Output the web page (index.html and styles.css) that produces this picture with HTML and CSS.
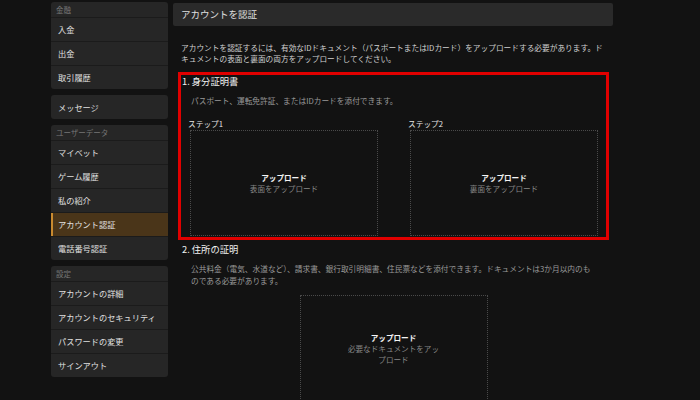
FILE: index.html
```html
<!doctype html>
<html lang="ja">
  <head>
    <meta charset="UTF-8" />
    <meta name="viewport" content="width=device-width, initial-scale=1.0" />
    <title>アカウントを認証</title>
    <link rel="stylesheet" href="styles.css">
  </head>
  <body>
    <div class="layout">
      <!-- サイドメニュー -->
      <nav class="sidebar">
        <div class="menu-group">
          <div class="menu-head">金融</div>
          <a class="menu-item" href="#">入金</a>
          <a class="menu-item" href="#">出金</a>
          <a class="menu-item" href="#">取引履歴</a>
        </div>
        <div class="menu-group">
          <a class="menu-item" href="#">メッセージ</a>
        </div>
        <div class="menu-group">
          <div class="menu-head">ユーザーデータ</div>
          <a class="menu-item" href="#">マイベット</a>
          <a class="menu-item" href="#">ゲーム履歴</a>
          <a class="menu-item" href="#">私の紹介</a>
          <a class="menu-item active" href="#">アカウント認証</a>
          <a class="menu-item" href="#">電話番号認証</a>
        </div>
        <div class="menu-group">
          <div class="menu-head">設定</div>
          <a class="menu-item" href="#">アカウントの詳細</a>
          <a class="menu-item" href="#">アカウントのセキュリティ</a>
          <a class="menu-item" href="#">パスワードの変更</a>
          <a class="menu-item" href="#">サインアウト</a>
        </div>
      </nav>

      <main class="main">
        <div class="page-head">アカウントを認証</div>
        <p class="intro">
          アカウントを認証するには、有効なIDドキュメント（パスポートまたはIDカード）をアップロードする必要があります。ドキュメントの表面と裏面の両方をアップロードしてください。
        </p>

        <section class="doc-section highlight">
          <div class="doc-title">1. 身分証明書</div>
          <p class="doc-note">パスポート、運転免許証、またはIDカードを添付できます。</p>
          <div class="steps">
            <div class="step">
              <div class="step-label">ステップ1</div>
              <div class="upload-box">
                <div class="upload-title">アップロード</div>
                <div class="upload-sub">表面をアップロード</div>
              </div>
            </div>
            <div class="step">
              <div class="step-label">ステップ2</div>
              <div class="upload-box">
                <div class="upload-title">アップロード</div>
                <div class="upload-sub">裏面をアップロード</div>
              </div>
            </div>
          </div>
        </section>

        <section class="doc-section">
          <div class="doc-title">2. 住所の証明</div>
          <p class="doc-note">公共料金（電気、水道など）、請求書、銀行取引明細書、住民票などを添付できます。ドキュメントは3か月以内のものである必要があります。</p>
          <div class="upload-box single">
            <div class="upload-title">アップロード</div>
            <div class="upload-sub">必要なドキュメントをアップロード</div>
          </div>
        </section>
      </main>
    </div>
  </body>
</html>
```

FILE: styles.css
```css
body {
  margin: 0;
  padding: 0;
  background: #121212;
  color: #ddd;
  font-family: 'Noto Sans CJK JP', 'Noto Sans', sans-serif;
}

.layout {
  display: flex;
  align-items: flex-start;
  gap: 5px;
  padding: 2px 0 20px 51px;
}

/* サイドメニュー */
.sidebar {
  width: 117px;
  display: flex;
  flex-direction: column;
  gap: 6px;
}

.menu-group {
  background: #262626;
  border-radius: 3px;
  overflow: hidden;
}

.menu-head {
  height: 15px;
  line-height: 15px;
  padding: 0 5px;
  font-size: 7.5px;
  color: #777;
}

.menu-item {
  display: block;
  box-sizing: border-box;
  height: 24px;
  line-height: 23px;
  padding: 0 7px;
  font-size: 8.2px;
  color: #e0e0e0;
  text-decoration: none;
  border-top: 1px solid #1b1b1b;
  white-space: nowrap;
}

.menu-group > .menu-item:first-child {
  border-top: none;
  line-height: 24px;
}

.menu-item.active {
  background: #4a3519;
  box-shadow: inset 2px 0 0 #c98a2f;
}

/* メイン */
.main {
  width: 440px;
}

.page-head {
  height: 23px;
  line-height: 23px;
  margin-top: 1px;
  padding: 0 8px;
  background: #2a2a2a;
  border-radius: 2px;
  font-size: 9.5px;
  color: #e0e0e0;
}

.intro {
  margin: 17px 0 0;
  padding: 0 6px 0 8px;
  font-size: 7.7px;
  line-height: 10.5px;
  color: #d0d0d0;
}

.doc-section {
  margin: 12px 8px 0 9px;
}

.highlight {
  outline: 3px solid #e00000;
  outline-offset: 1px;
}

.doc-section + .doc-section {
  margin-top: 8px;
}

.doc-title {
  font-size: 9.3px;
  line-height: 11px;
  color: #f2f2f2;
}

.doc-note {
  margin: 8px 8px 0 9px;
  font-size: 7.7px;
  line-height: 12px;
  color: #9a9a9a;
}

.highlight .doc-note {
  line-height: 11px;
}

.steps {
  display: grid;
  grid-template-columns: 1fr 1fr;
  gap: 30px;
  margin-top: 13px;
  padding: 0 7px 0 6px;
}

.step-label {
  font-size: 7.7px;
  line-height: 10px;
  color: #e6e6e6;
}

.step .upload-box {
  margin: 1px 0 0 2px;
}

.upload-box {
  box-sizing: border-box;
  height: 106px;
  padding: 0 45px;
  border: 1px dotted #4a4a4a;
  display: flex;
  flex-direction: column;
  justify-content: center;
  align-items: center;
  text-align: center;
  font-size: 7.6px;
  line-height: 11px;
}

.upload-box.single {
  width: 188px;
  margin: 8px auto 0;
}

.upload-title {
  font-weight: bold;
  color: #f5f5f5;
}

.upload-sub {
  color: #888;
}
```
